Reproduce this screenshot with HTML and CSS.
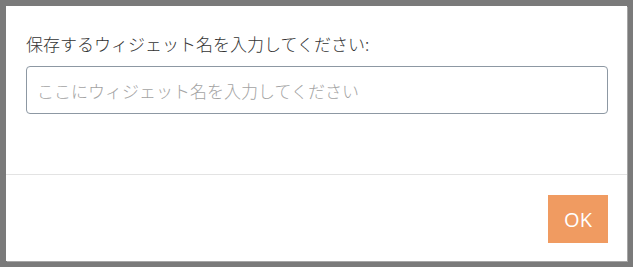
FILE: index.html
```html
<!DOCTYPE html>
<html lang="ja">
<head>
<meta charset="utf-8">
<link rel="stylesheet" href="styles.css">
</head>
<body>
<div class="dialog">
  <div class="dialog-body">
    <label class="prompt" for="name">保存するウィジェット名を入力してください:</label>
    <input id="name" class="name-input" type="text" placeholder="ここにウィジェット名を入力してください">
  </div>
  <div class="dialog-footer">
    <button class="ok-btn" type="button">OK</button>
  </div>
</div>
</body>
</html>
```

FILE: styles.css
```css
html, body {
  margin: 0;
  padding: 0;
}
body {
  background: #7a7a7a;
  width: 633px;
  height: 267px;
  padding: 6px 0 0 6px;
  box-sizing: border-box;
  font-family: "Noto Sans CJK JP", "Noto Sans", sans-serif;
}
.dialog {
  width: 621px;
  height: 255px;
  background: #ffffff;
  box-shadow: 1px 1px 0 #a6a6a6;
  display: flex;
  flex-direction: column;
}
.dialog-body {
  padding: 26px 20px 0 20px;
  height: 169px;
  flex: none;
  box-sizing: border-box;
  border-bottom: 1px solid #e3e3e3;
  display: flex;
  flex-direction: column;
}
.prompt {
  display: block;
  font-size: 17px;
  font-weight: 300;
  line-height: 24px;
  color: #333333;
  margin-bottom: 10px;
  white-space: nowrap;
}
.name-input {
  box-sizing: border-box;
  width: 582px;
  height: 48px;
  border: 1px solid #8d98a3;
  border-radius: 4px;
  padding: 0 10px;
  font-family: "Noto Sans CJK JP", "Noto Sans", sans-serif;
  font-size: 17px;
  font-weight: 300;
  color: #333;
  outline: none;
}
.name-input::placeholder {
  color: #a3a3a3;
  opacity: 1;
}
.dialog-footer {
  flex: 1;
  display: flex;
  justify-content: flex-end;
  align-items: flex-start;
  padding: 20px 19px 0 0;
}
.ok-btn {
  width: 60px;
  height: 48px;
  background: #f09b61;
  border: none;
  border-radius: 0;
  color: #ffffff;
  font-family: "Open Sans", "Liberation Sans", sans-serif;
  font-size: 20px;
  padding: 0;
  cursor: pointer;
}
```
